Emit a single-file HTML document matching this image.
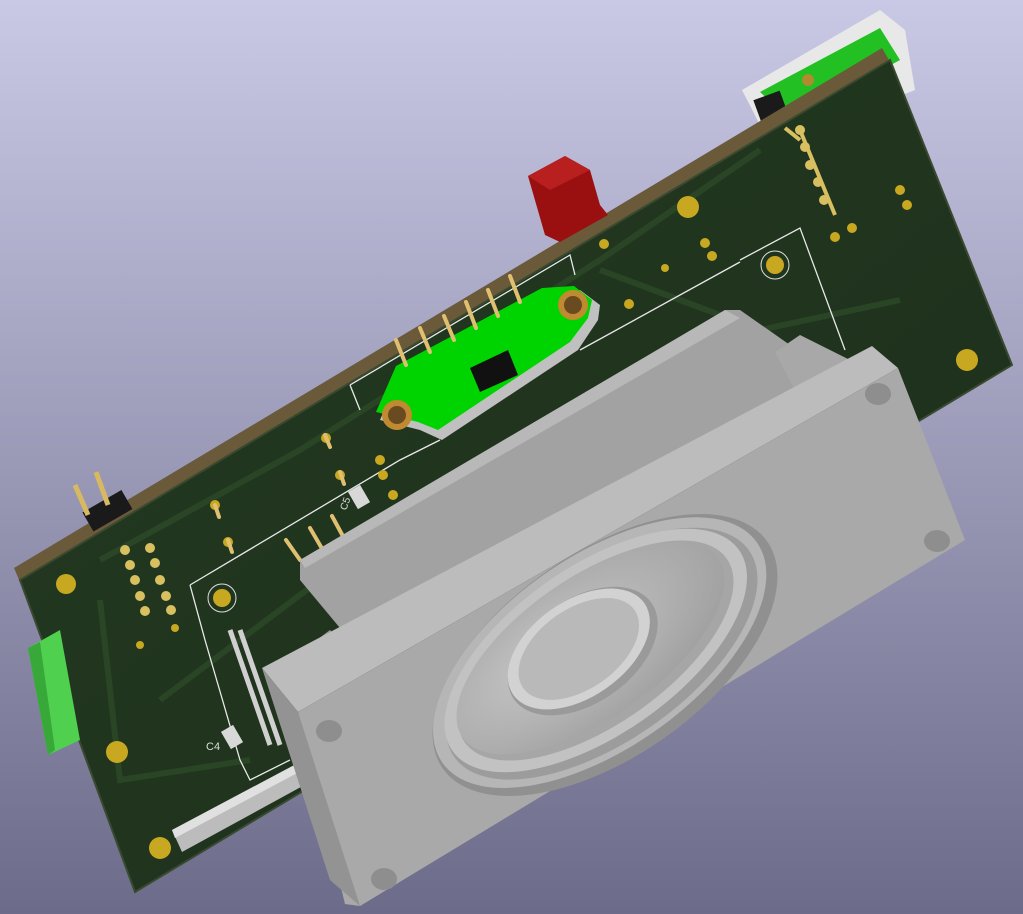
<!DOCTYPE html>
<html><head><meta charset="utf-8"><style>
html,body{margin:0;padding:0;width:1023px;height:914px;overflow:hidden}
svg{display:block}
</style></head><body>
<svg width="1023" height="914" viewBox="0 0 1023 914" xmlns="http://www.w3.org/2000/svg">
<defs>
<linearGradient id="bg" x1="0" y1="0" x2="0" y2="1">
<stop offset="0" stop-color="#c9c9e6"/><stop offset="1" stop-color="#6c6c8a"/></linearGradient>
<linearGradient id="board" x1="0" y1="0" x2="1" y2="1">
<stop offset="0" stop-color="#243a22"/><stop offset="1" stop-color="#1c2e1a"/></linearGradient>
<radialGradient id="cone" cx="0.4" cy="0.4" r="0.7">
<stop offset="0" stop-color="#c8c8c8"/><stop offset="1" stop-color="#9e9e9e"/></radialGradient>
</defs>
<rect width="1023" height="914" fill="url(#bg)"/>
<polygon points="742,90 880,10 905,30 915,90 790,140 760,125" fill="#e8e8e8"/>
<polygon points="760,92 880,28 900,60 790,120" fill="#22c022"/>
<rect x="757" y="95" width="28" height="26" fill="#1a1a1a" transform="rotate(-20 770 108)"/>
<circle cx="808" cy="80" r="6" fill="#b08a30"/>
<polygon points="14,568 882,48 890,62 20,582" fill="#6a5a3a"/>
<polygon points="20,580 890,60 1012,365 135,892" fill="url(#board)"/>
<polygon points="20,580 890,60 1012,365 135,892" fill="none" stroke="#3a4a30" stroke-width="2"/>
<g stroke="#2d4a28" stroke-width="6" fill="none" opacity="0.8">
<path d="M100,560 L300,450 L600,260 L760,150"/>
<path d="M100,600 L120,780 L250,760"/>
<path d="M600,270 L760,330 L900,300"/>
<path d="M160,700 L400,520"/>
</g>
<g stroke="#e8e8e8" stroke-width="1.3" fill="none">
<polyline points="190,585 400,460 440,440"/>
<polyline points="190,585 205,640 240,760 250,780 290,760"/>
<polyline points="740,260 800,228 845,350"/>
<polyline points="350,385 570,255 575,275"/>
<polyline points="350,385 360,410"/>
<polyline points="580,350 740,262"/>
</g>
<circle cx="222" cy="598" r="14" fill="none" stroke="#ddd" stroke-width="1"/>
<circle cx="775" cy="265" r="14" fill="none" stroke="#ddd" stroke-width="1"/>
<g fill="#c8a820">
<circle cx="66" cy="584" r="10"/><circle cx="117" cy="752" r="11"/><circle cx="160" cy="848" r="11"/>
<circle cx="688" cy="207" r="11"/><circle cx="967" cy="360" r="11"/><circle cx="222" cy="598" r="9"/><circle cx="775" cy="265" r="9"/>
<circle cx="604" cy="244" r="5"/><circle cx="665" cy="268" r="4"/><circle cx="629" cy="304" r="5"/><circle cx="705" cy="243" r="5"/><circle cx="712" cy="256" r="5"/>
<circle cx="326" cy="438" r="5"/><circle cx="340" cy="475" r="5"/><circle cx="380" cy="460" r="5"/><circle cx="383" cy="475" r="5"/><circle cx="393" cy="495" r="5"/>
<circle cx="215" cy="505" r="5"/><circle cx="228" cy="542" r="5"/><circle cx="175" cy="628" r="4"/><circle cx="140" cy="645" r="4"/>
<circle cx="835" cy="237" r="5"/><circle cx="852" cy="228" r="5"/><circle cx="907" cy="205" r="5"/><circle cx="900" cy="190" r="5"/>
</g>
<g fill="#d8c060">
<circle cx="125" cy="550" r="5"/><circle cx="130" cy="565" r="5"/><circle cx="135" cy="580" r="5"/><circle cx="140" cy="596" r="5"/><circle cx="145" cy="611" r="5"/>
<circle cx="150" cy="548" r="5"/><circle cx="155" cy="563" r="5"/><circle cx="160" cy="580" r="5"/><circle cx="166" cy="596" r="5"/><circle cx="171" cy="610" r="5"/>
<circle cx="800" cy="130" r="5"/><circle cx="805" cy="147" r="5"/><circle cx="810" cy="165" r="5"/><circle cx="818" cy="182" r="5"/><circle cx="824" cy="200" r="5"/>
</g>
<g stroke="#d8c060" stroke-width="4">
<line x1="800" y1="130" x2="835" y2="215"/><line x1="785" y1="128" x2="800" y2="140"/>
</g>
<rect x="85" y="500" width="45" height="22" fill="#1a1a1a" transform="rotate(-30 107 511)"/>
<g stroke="#d8b860" stroke-width="5"><line x1="75" y1="485" x2="88" y2="515"/><line x1="96" y1="472" x2="108" y2="505"/></g>
<polygon points="28,648 60,630 80,740 48,755" fill="#4fd04f"/>
<polygon points="28,648 40,642 55,750 48,755" fill="#38a838"/>
<polygon points="528,176 565,156 590,170 600,205 608,215 560,242 545,235" fill="#9a1010"/>
<polygon points="528,176 565,156 590,170 550,190" fill="#b82020"/>
<polygon points="380,420 400,372 548,292 580,290 600,305 598,320 578,350 442,440 420,430" fill="#c0c0c0"/>
<polygon points="376,412 396,366 542,288 574,286 592,300 588,318 570,342 438,430 418,422" fill="#00d400"/>
<circle cx="573" cy="305" r="15" fill="#c08a30"/><circle cx="573" cy="305" r="9" fill="#6a4a20"/>
<circle cx="397" cy="415" r="15" fill="#c08a30"/><circle cx="397" cy="415" r="9" fill="#6a4a20"/>
<polygon points="470,368 508,350 518,375 480,392" fill="#111"/>
<g stroke="#e0c070" stroke-width="4" stroke-linecap="round">
<line x1="396" y1="340" x2="406" y2="365"/><line x1="420" y1="328" x2="430" y2="352"/><line x1="444" y1="316" x2="454" y2="340"/>
<line x1="466" y1="302" x2="476" y2="328"/><line x1="488" y1="290" x2="498" y2="316"/><line x1="510" y1="276" x2="520" y2="302"/>
<line x1="286" y1="540" x2="300" y2="560"/><line x1="310" y1="528" x2="324" y2="552"/><line x1="332" y1="516" x2="345" y2="540"/>
<line x1="325" y1="435" x2="330" y2="447"/><line x1="340" y1="472" x2="344" y2="484"/><line x1="215" y1="505" x2="219" y2="517"/><line x1="228" y1="540" x2="232" y2="552"/>
</g>
<rect x="352" y="487" width="14" height="20" fill="#d8d8d8" transform="rotate(-30 359 497)"/>
<rect x="225" y="727" width="14" height="20" fill="#d8d8d8" transform="rotate(-30 232 737)"/>
<text x="206" y="750" fill="#ddd" font-family="Liberation Sans, sans-serif" font-size="11">C4</text>
<text x="340" y="508" fill="#ddd" font-family="Liberation Sans, sans-serif" font-size="10" transform="rotate(-70 345 505)">C5</text>
<g stroke="#d0d0d0" stroke-width="5"><line x1="230" y1="630" x2="270" y2="745"/><line x1="240" y1="630" x2="280" y2="745"/></g>
<polygon points="172,830 300,762 310,782 182,852" fill="#bcbcbc"/>
<polygon points="172,830 300,762 303,770 175,838" fill="#e0e0e0"/>
<!-- speaker box -->
<polygon points="300,560 725,310 740,310 790,345 798,392 360,652 300,580" fill="#a2a2a2"/>
<polygon points="300,560 725,310 740,318 305,568" fill="#b8b8b8"/>
<polygon points="775,352 800,335 850,360 885,362 800,400" fill="#a8a8a8"/>
<polygon points="290,660 330,630 350,650 300,700" fill="#999"/>
<polygon points="262,668 872,346 898,368 298,712" fill="#bcbcbc"/>
<polygon points="298,712 898,368 965,540 360,906 345,904" fill="#a9a9a9"/>
<polygon points="262,668 298,712 360,906 330,880" fill="#939393"/>
<g fill="#8e8e8e"><ellipse cx="329" cy="731" rx="13" ry="11"/><ellipse cx="878" cy="394" rx="13" ry="11"/><ellipse cx="937" cy="541" rx="13" ry="11"/><ellipse cx="384" cy="879" rx="13" ry="11"/></g>
<!-- cone -->
<g transform="translate(605,655) rotate(-35)">
<ellipse cx="0" cy="0" rx="198" ry="102" fill="#909090"/>
<ellipse cx="-3" cy="-5" rx="192" ry="96" fill="#b6b6b6"/>
<ellipse cx="-2" cy="-3" rx="180" ry="88" fill="#9c9c9c"/>
<ellipse cx="-5" cy="-9" rx="175" ry="84" fill="#c2c2c2"/>
<ellipse cx="-5" cy="-9" rx="160" ry="74" fill="#a6a6a6"/>
<ellipse cx="-8" cy="-14" rx="156" ry="70" fill="url(#cone)"/>
<ellipse cx="-16" cy="-16" rx="84" ry="52" fill="#9a9a9a"/>
<ellipse cx="-18" cy="-20" rx="80" ry="48" fill="#d2d2d2"/>
<ellipse cx="-18" cy="-20" rx="68" ry="40" fill="#b9b9b9"/>
</g>
</svg>
</body></html>
